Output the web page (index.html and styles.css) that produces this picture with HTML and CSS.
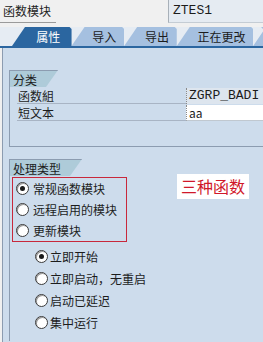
FILE: index.html
```html
<!DOCTYPE html>
<html lang="zh-CN">
<head>
    <meta charset="UTF-8">
    <title>函数模块</title>
    <link rel="stylesheet" href="styles.css">
</head>
<body>
    <div class="topbar">
        <div class="topbar-label">函数模块</div>
        <div class="topbar-value">ZTES1</div>
    </div>
    <div class="tabs">
        <div class="tab tab-active">属性</div>
        <div class="tab">导入</div>
        <div class="tab">导出</div>
        <div class="tab tab-wide">正在更改</div>
        <div class="tab tab-more"></div>
    </div>
    <div class="panel">
        <div class="group group-first">
            <div class="group-title">分类</div>
            <div class="field">
                <span class="field-label">函数組</span>
                <span class="field-input field-readonly">ZGRP_BADI</span>
            </div>
            <div class="field">
                <span class="field-label">短文本</span>
                <span class="field-input field-edit">aa</span>
            </div>
        </div>
        <div class="group group-second">
            <div class="group-title title-wide">处理类型</div>
            <div class="type-row">
                <div class="marked">
                    <div class="radio"><span class="dot on"></span>常规函数模块</div>
                    <div class="radio"><span class="dot"></span>远程启用的模块</div>
                    <div class="radio"><span class="dot"></span>更新模块</div>
                </div>
                <div class="note">三种函数</div>
            </div>
            <div class="sub-options">
                <div class="radio sub"><span class="dot on"></span>立即开始</div>
                <div class="radio sub"><span class="dot"></span>立即启动，无重启</div>
                <div class="radio sub"><span class="dot"></span>启动已延迟</div>
                <div class="radio sub"><span class="dot"></span>集中运行</div>
            </div>
        </div>
    </div>
</body>
</html>
```

FILE: styles.css
```css
body {
    margin: 0;
    width: 263px;
    height: 342px;
    overflow: hidden;
    background: #f0f0f0;
    font-family: "Noto Sans CJK SC", "DejaVu Sans", sans-serif;
    font-size: 12px;
    color: #1c1c1c;
}

.topbar {
    display: flex;
    justify-content: space-between;
    height: 23px;
}

.topbar-label {
    width: 53px;
    padding-left: 3px;
    line-height: 22px;
    border-bottom: 1px solid #9a9a9a;
}

.topbar-value {
    width: 90px;
    padding-left: 4px;
    line-height: 22px;
    background: #e5ebf2;
    border-left: 1px solid #a8b0b8;
    border-bottom: 1px solid #c4ccd4;
    font-family: "Liberation Mono", monospace;
    font-size: 13px;
}

.tabs {
    display: flex;
    margin-top: 4px;
    padding-left: 12px;
    height: 19px;
    background: #e6ecf3;
    border-bottom: 2px solid #2b66a0;
}

.tab {
    width: 53px;
    padding-left: 13px;
    box-sizing: border-box;
    text-align: center;
    line-height: 19px;
    background: #a5c0e0;
    clip-path: polygon(13px 0, calc(100% - 2px) 0, 100% 2px, 100% 100%, 0 100%);
}

.tab-active {
    width: 60px;
    background: #2b66a0;
    color: #ffffff;
}

.tab-wide {
    width: 77px;
}

.tab-more {
    width: 10px;
    padding: 0;
}

.panel {
    margin-left: 2px;
    height: 272px;
    overflow: hidden;
    padding: 22px 0 0 6px;
    background: #cddcec;
    border-left: 1px solid #8c9cb0;
}

.group {
    border-left: 1px solid #8c9cb0;
}

.group-first {
    padding-bottom: 25px;
    border-bottom: 1px solid #8c9cb0;
}

.group-second {
    margin-top: 12px;
    height: 182px;
}

.group-title {
    width: 48px;
    height: 17px;
    padding-left: 3px;
    box-sizing: border-box;
    line-height: 17px;
    background: #aecbd9;
    border-top: 1px solid #8c9cb0;
    clip-path: polygon(0 0, 100% 0, calc(100% - 12px) 100%, 0 100%);
}

.title-wide {
    width: 72px;
}

.field {
    display: flex;
    height: 16px;
    margin-left: 7px;
    margin-top: 1px;
}

.field-label {
    width: 168px;
    padding-left: 1px;
    line-height: 16px;
    border-bottom: 1px solid #a8b4c4;
}

.field-input {
    flex: 1;
    padding-left: 2px;
    line-height: 16px;
    border-left: 1px dotted #8a8a8a;
}

.field-readonly {
    background: #dde5ee;
    font-family: "Liberation Mono", monospace;
    font-size: 13px;
}

.field-edit {
    background: #ffffff;
    border-bottom: 1px solid #c0c8d0;
}

.type-row {
    display: flex;
    align-items: flex-start;
    margin-top: 1px;
    margin-left: 2px;
}

.marked {
    width: 113px;
    border: 1px solid #c8283c;
}

.note {
    margin: -3px 0 0 50px;
    width: 72px;
    height: 25px;
    line-height: 25px;
    text-align: center;
    background: #ffffff;
    color: #d0182a;
    font-size: 16px;
}

.radio {
    display: flex;
    align-items: center;
    height: 21px;
    padding-left: 3px;
    gap: 4px;
    font-size: 12px;
}

.dot {
    width: 11px;
    height: 11px;
    border-radius: 50%;
    background: #ffffff;
    border: 1px solid #3a3a3a;
    box-shadow: inset 1px 1px 0 #9a9a9a;
    display: flex;
    align-items: center;
    justify-content: center;
}

.dot.on::after {
    content: "";
    width: 5px;
    height: 5px;
    border-radius: 50%;
    background: #1a1a1a;
}

.sub-options {
    margin-top: 3px;
}

.radio.sub {
    height: 22px;
    padding-left: 25px;
    gap: 2px;
}
```
